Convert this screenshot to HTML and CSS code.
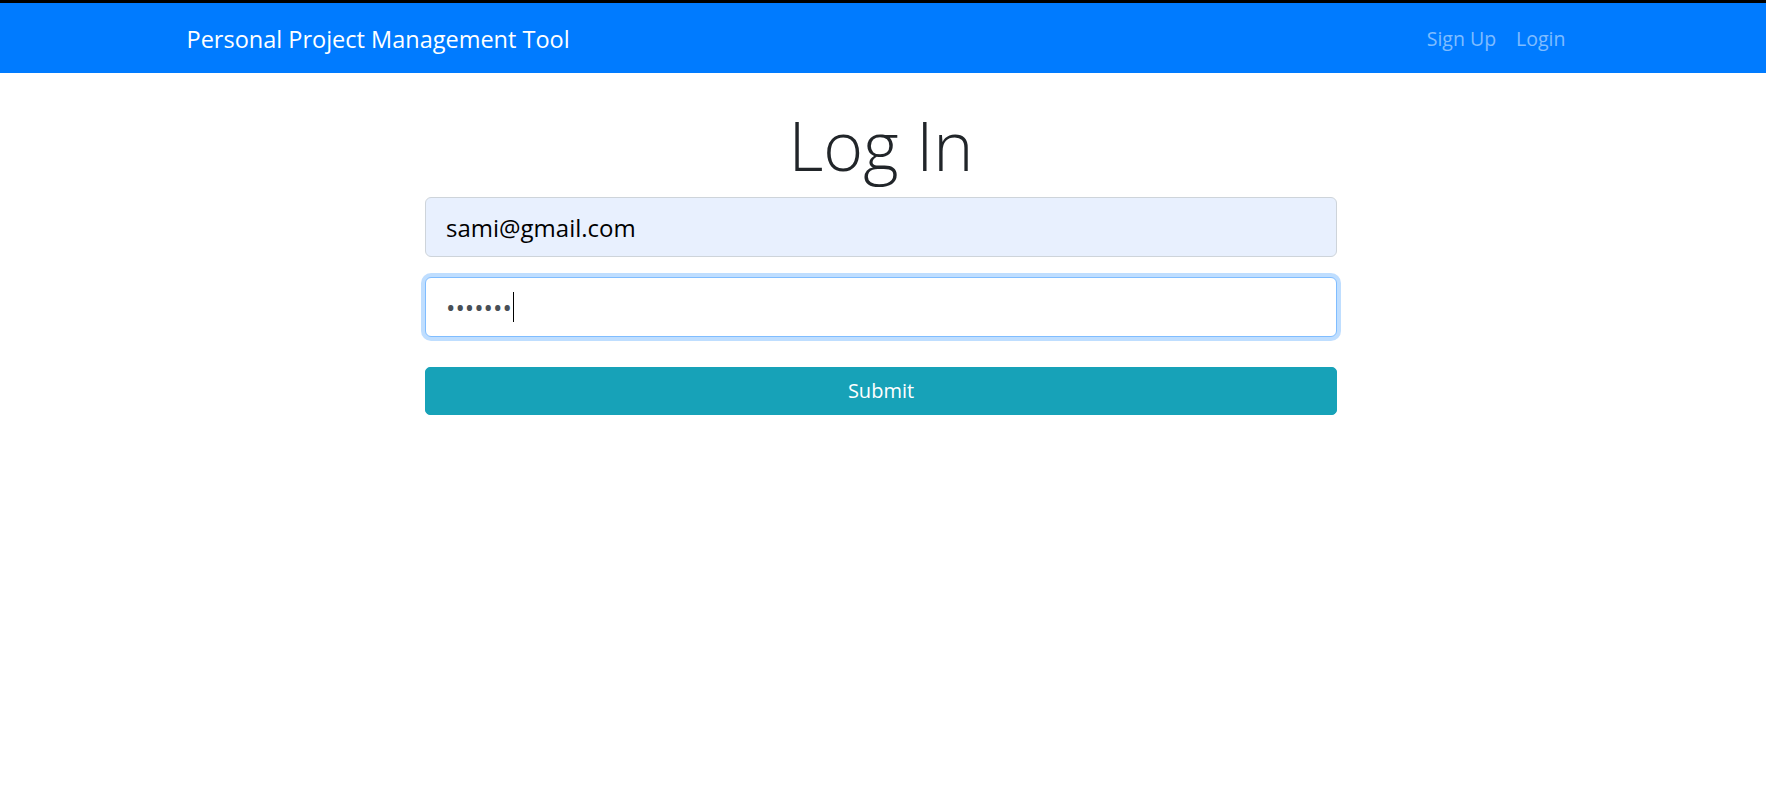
FILE: index.html
```html
<!DOCTYPE html>
<html lang="en">
<head>
<meta charset="utf-8">
<title>Log In</title>
<link rel="stylesheet" href="styles.css">
</head>
<body>
<div class="frame-line"></div>
<nav class="navbar">
  <div class="container nav-inner">
    <a class="brand" href="#">Personal Project Management Tool</a>
    <ul class="nav-links">
      <li><a class="nav-link" href="#">Sign Up</a></li>
      <li><a class="nav-link" href="#">Login</a></li>
    </ul>
  </div>
</nav>
<main class="page">
  <div class="container">
    <div class="login-col">
      <h1 class="title">Log In</h1>
      <form class="login-form">
        <div class="form-group">
          <input class="field field-autofill" type="email" value="sami@gmail.com" aria-label="Email">
        </div>
        <div class="form-group">
          <div class="field field-focus" role="textbox" aria-label="Password"><span class="dots">•••••••</span><span class="caret"></span></div>
        </div>
        <button class="btn-submit" type="button">Submit</button>
      </form>
    </div>
  </div>
</main>
</body>
</html>
```
FILE: styles.css
```css
* { box-sizing: border-box; }
html, body { margin: 0; padding: 0; }
body {
  font-family: "Open Sans", "Noto Sans", sans-serif;
  font-size: 20px;
  line-height: 1.5;
  color: #212529;
  background: #fff;
}
.frame-line { height: 3px; background: #000; }
.navbar {
  background: #007bff;
  height: 70px;
  padding: 10px 20px;
  display: flex;
  align-items: center;
}
.container {
  width: 100%;
  max-width: 1425px;
  margin: 0 auto;
  padding: 0 17px;
}
.nav-inner {
  display: flex;
  align-items: center;
  justify-content: space-between;
  padding: 0 20px 0 16px;
}
.brand {
  color: #fff;
  text-decoration: none;
  font-size: 23.5px;
  line-height: 37px;
  padding: 7px 0 5px;
}
.nav-links {
  list-style: none;
  margin: 0;
  padding: 0;
  display: flex;
}
.nav-link {
  display: block;
  padding: 11px 10px 9px;
  color: rgba(255, 255, 255, 0.5);
  text-decoration: none;
  font-size: 19.5px;
  line-height: 30px;
}
.page { padding-top: 30px; }
.login-col {
  width: 912px;
  margin: 0 auto 0 calc(50% - 458px);
}
.title {
  margin: 0 0 10px;
  text-align: center;
  font-size: 68px;
  font-weight: 300;
  line-height: 84px;
  color: #212529;
}
.login-form { margin: 0; }
.form-group { margin-bottom: 20px; }
.field {
  display: block;
  width: 100%;
  height: 60px;
  padding: 10px 20px;
  font-family: inherit;
  font-size: 24px;
  line-height: 37px;
  color: #495057;
  background: #fff;
  border: 1px solid #ced4da;
  border-radius: 6px;
  outline: none;
}
.field-autofill {
  background: #e8f0fe;
  color: #000;
}
.field-focus {
  border-color: #80bdff;
  box-shadow: 0 0 0 4px rgba(0, 123, 255, 0.25);
  display: flex;
  align-items: center;
  font-size: 25px;
}
.caret {
  display: inline-block;
  width: 1px;
  height: 30px;
  background: #000;
  margin-left: 1px;
}
.btn-submit {
  display: block;
  width: 100%;
  margin-top: 30px;
  height: 48px;
  padding: 7px 15px;
  font-family: inherit;
  font-size: 20px;
  line-height: 30px;
  color: #fff;
  background: #17a2b8;
  border: 1px solid #17a2b8;
  border-radius: 5px;
  cursor: pointer;
}
```
